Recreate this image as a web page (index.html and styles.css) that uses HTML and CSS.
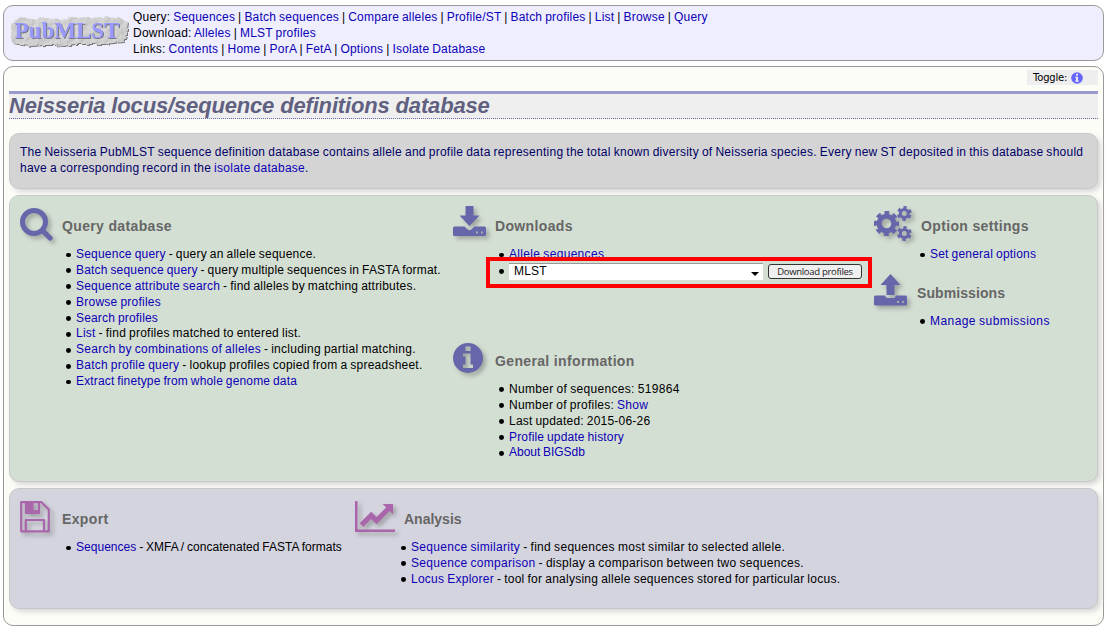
FILE: index.html
```html
<!DOCTYPE html>
<html lang="en">
<head>
<meta charset="utf-8">
<title>Neisseria locus/sequence definitions database</title>
<link rel="stylesheet" href="styles.css">
</head>
<body>
<header class="top">
  <svg class="logo" width="121" height="36" viewBox="0 0 121 36">
    <defs>
      <filter id="stone" x="-5%" y="-10%" width="110%" height="120%">
        <feTurbulence type="fractalNoise" baseFrequency="0.16" numOctaves="3" seed="4" result="n"/>
        <feDisplacementMap in="SourceGraphic" in2="n" scale="5" result="d"/>
        <feDiffuseLighting in="n" surfaceScale="1" lighting-color="#dadada" result="l"><feDistantLight azimuth="225" elevation="64"/></feDiffuseLighting>
        <feComposite in="l" in2="d" operator="in" result="s"/>
        <feDropShadow in="s" dx="1" dy="1" stdDeviation=".6" flood-color="#666" flood-opacity=".9"/>
      </filter>
    </defs>
    <path filter="url(#stone)" fill="#c4c4c4" d="M6 5 L14 3 L24 4 L36 2 L50 4 L62 2 L82 3 L95 2 L111 3 L119 7 L117 20 L114 27 L94 29 L80 29 L65 29 L54 31 L45 30 L34 30 L22 31 L12 30 L4 28 L2 20 L2 9Z"/>
    <text class="logo-text" x="5.500" y="23" textLength="105" lengthAdjust="spacingAndGlyphs">PubMLST</text>
  </svg>
  <div class="nav">
    <div class="n1">Query: <a>Sequences</a> | <a>Batch sequences</a> | <a>Compare alleles</a> | <a>Profile/ST</a> | <a>Batch profiles</a> | <a>List</a> | <a>Browse</a> | <a>Query</a></div>
    <div class="n2">Download: <a>Alleles</a> | <a>MLST profiles</a></div>
    <div class="n3">Links: <a>Contents</a> | <a>Home</a> | <a>PorA</a> | <a>FetA</a> | <a>Options</a> | <a>Isolate Database</a></div>
  </div>
</header>
<main class="page">
  <div class="toggle"><span>Toggle:</span>
    <svg width="12" height="12" viewBox="0 0 12 12"><circle cx="6" cy="6" r="5.800" fill="#66f"/><path fill="#eee" d="M5 1.800h2v1.700H5zM4.200 4.700H7v3.800h.8v1.200H4.200V8.500H5V5.800h-.8z"/></svg>
  </div>
  <h1><span>Neisseria locus/sequence definitions database</span></h1>
  <section class="box intro"><div class="i1">The Neisseria PubMLST sequence definition database contains allele and profile data representing the total known diversity of Neisseria species. Every new ST deposited in this database should</div><div class="i2">have a corresponding record in the <a>isolate database</a>.</div></section>

  <section class="box index">
    <div class="col query">
      <div class="group">
        <svg class="icon" width="42" height="42" viewBox="0 0 42 42"><g class="cast"><circle cx="14" cy="14" r="11.500" fill="none" stroke="#66a" stroke-width="5"/><path d="M22.500 22.500l7.500 7.500" fill="none" stroke="#66a" stroke-width="5.200" stroke-linecap="round"/></g></svg>
        <h2>Query database</h2>
      </div>
      <ul>
        <li><a>Sequence query</a> - query an allele sequence.</li>
        <li><a>Batch sequence query</a> - query multiple sequences in FASTA format.</li>
        <li><a>Sequence attribute search</a> - find alleles by matching attributes.</li>
        <li><a>Browse profiles</a></li>
        <li><a>Search profiles</a></li>
        <li><a>List</a> - find profiles matched to entered list.</li>
        <li><a>Search by combinations of alleles</a> - including partial matching.</li>
        <li><a>Batch profile query</a> - lookup profiles copied from a spreadsheet.</li>
        <li><a>Extract finetype from whole genome data</a></li>
      </ul>
    </div>
    <div class="col downloads">
      <div class="group">
        <svg class="icon" width="42" height="42" viewBox="0 0 42 42"><g class="cast" fill="#66a"><path d="M12.500 -2h8v9.500H26.500L16.500 18 6.500 7.500h6z"/><path fill-rule="evenodd" d="M1.500 18.500h10l3.200 3q1.800 1.500 3.600 0l3.200-3h10q1.500 0 1.500 1.500v6.500q0 1.500-1.500 1.500H1.500Q0 28 0 26.500V20q0-1.500 1.500-1.500zM23 23.500v1.900h1.900v-1.900zM28 23.500v1.900h1.900v-1.900z"/></g></svg>
        <h2>Downloads</h2>
      </div>
      <ul class="files">
        <li><a>Allele sequences</a></li>
        <li class="form"><div class="select">MLST<i></i></div><button>Download profiles</button></li>
      </ul>
      <div class="frame"></div>
      <div class="group info">
        <svg class="icon" width="42" height="42" viewBox="0 0 42 42"><g class="cast"><path fill="#66a" fill-rule="evenodd" d="M15 0a15 15 0 1 1 0 30a15 15 0 0 1 0-30zM12.500 3.500v4.500h5V3.500zM10 10.500v3h2.500v8H10v3.500h10v-3.500h-2.500V10.500z"/></g></svg>
        <h2>General information</h2>
      </div>
      <ul class="facts">
        <li>Number of sequences: 519864</li>
        <li>Number of profiles: <a>Show</a></li>
        <li>Last updated: 2015-06-26</li>
        <li><a>Profile update history</a></li>
        <li><a>About BIGSdb</a></li>
      </ul>
    </div>
    <div class="col options">
      <div class="group">
        <svg class="icon" width="42" height="42" viewBox="0 0 42 42"><g class="cast" fill="none" stroke="#66a"><circle cx="12.500" cy="15.500" r="7.300" stroke-width="5"/><circle cx="12.500" cy="15.500" r="10.800" stroke-width="3.500" stroke-dasharray="4.800 3.682" stroke-dashoffset="2.400"/><circle cx="30.300" cy="5.500" r="4" stroke-width="3"/><circle cx="30.300" cy="5.500" r="6.100" stroke-width="2.600" stroke-dasharray="3.200 3.188" stroke-dashoffset="-1.600"/><circle cx="30.300" cy="25.500" r="4" stroke-width="3"/><circle cx="30.300" cy="25.500" r="6.100" stroke-width="2.600" stroke-dasharray="3.200 3.188" stroke-dashoffset="-1.600"/></g></svg>
        <h2>Option settings</h2>
      </div>
      <ul class="set"><li><a>Set general options</a></li></ul>
      <div class="group sub">
        <svg class="icon" width="42" height="42" viewBox="0 0 42 42"><g class="cast" fill="#66a"><path d="M16.500 -1L26.500 10H20.500v10h-8V10h-6z"/><path fill-rule="evenodd" d="M1.500 20.500h9.500q.8 2.500 2.500 2.500h6q1.700 0 2.500-2.500h9.500q1.500 0 1.500 1.500v7q0 1.500-1.500 1.500H1.500Q0 30.500 0 29v-7q0-1.500 1.500-1.500zM23 26v1.900h1.900v-1.900zM28 26v1.900h1.900v-1.900z"/></g></svg>
        <h2>Submissions</h2>
      </div>
      <ul class="manage"><li><a>Manage submissions</a></li></ul>
    </div>
  </section>

  <section class="box tools">
    <div class="col export">
      <div class="group">
        <svg class="icon" width="42" height="42" viewBox="0 0 42 42"><g class="cast"><path fill="none" stroke="#a6a" stroke-width="2.200" stroke-linejoin="round" d="M1.200 1.200H21.500L28.800 8.500V30.300H1.200zM5.800 30V19H24v11M6 1.200V12H19V1.200"/><path fill="#a6a" d="M6 1h7.500v10H6zM13.500 9h6v3h-6z"/></g></svg>
        <h2>Export</h2>
      </div>
      <ul><li><a>Sequences</a> - XMFA / concatenated FASTA formats</li></ul>
    </div>
    <div class="col analysis">
      <div class="group">
        <svg class="icon" width="50" height="42" viewBox="0 0 50 42"><g class="cast"><path fill="#a6a" d="M0 0h2.500v28.500H40V31H0z"/><path fill="#a6a" d="M4.700 22.200L16.200 10.700 21.500 16 31.200 6.500 27.700 3H38v10.300L34.700 10 21.500 23.200 16.200 18 8.200 26z"/></g></svg>
        <h2>Analysis</h2>
      </div>
      <ul>
        <li><a>Sequence similarity</a> - find sequences most similar to selected allele.</li>
        <li><a>Sequence comparison</a> - display a comparison between two sequences.</li>
        <li><a>Locus Explorer</a> - tool for analysing allele sequences stored for particular locus.</li>
      </ul>
    </div>
  </section>
</main>
</body>
</html>
```
FILE: styles.css
```css
* { box-sizing: border-box; }
body { margin: 0; padding: 5px 3px 0; width: 1107px; height: 632px; overflow: hidden; background: #fff; color: #000; font: 12px/16px "Liberation Sans", Arial, sans-serif; letter-spacing: .21px; word-spacing: -.6px; }
a { color: #0d00b5; }
.top { display: flex; width: 1101px; height: 56px; background: #eef; border: 1px solid #999; border-radius: 10px; }
.logo { margin: 9px 0 0 5px; }
.logo-text { font: bold 23px "Liberation Serif", serif; fill: #99f; letter-spacing: 0; filter: drop-shadow(1px 1px .3px #778); }
.nav { margin: 3px 0 0 3px; white-space: nowrap; }
.page { width: 1101px; height: 560px; margin-top: 5px; padding: 3px 5px 0; background: #fdfdf8; border: 1px solid #999; border-radius: 10px; }
.toggle { display: flex; align-items: center; width: 71px; height: 15px; margin-left: auto; padding-left: 6px; gap: 4px; background: #eee; font: 10px/15px "DejaVu Sans", sans-serif; letter-spacing: -.2px; }
h1 { height: 28px; margin: 6px 0 0; border-top: 3px solid #99c; border-bottom: 1px dotted #66a; background: #efefef; color: #606080; font: italic bold 22px/23px "Liberation Sans", Arial, sans-serif; white-space: nowrap; letter-spacing: -.16px; word-spacing: 0; }
.box { border: 1px solid #c8c8c8; border-radius: 10px; box-shadow: 3px 3px 5px #d8d8d8; }
.intro { height: 56px; margin-top: 14px; padding: 10px; background: #d4d4d4; color: #006; white-space: nowrap; letter-spacing: .255px; }
.index { position: relative; display: flex; height: 287px; margin-top: 6px; padding-left: 10px; background: #d4dfd4; }
.tools { display: flex; height: 121px; margin-top: 6px; padding-left: 10px; background: #d4d4df; }
.query { width: 433px; }
.downloads { width: 421px; }
.export { width: 335px; }
.col { padding-top: 12px; white-space: nowrap; }
.group { display: flex; height: 39px; }
.icon { flex: none; overflow: visible; }
.cast { filter: drop-shadow(3px 3px 2px rgba(80,80,80,.4)); }
h2 { margin: 9px 0 0; color: #666; font: bold 14px/18px "Liberation Sans", Arial, sans-serif; letter-spacing: .35px; word-spacing: 0; }
ul { margin: 0; padding: 0 0 0 56px; list-style: none; line-height: 15.87px; }
li { position: relative; }
li::before { content: ""; position: absolute; left: -10.3px; top: 5.6px; width: 4.8px; height: 4.8px; border-radius: 50%; background: #000; }
.form { display: flex; align-items: center; gap: 5px; height: 18px; }
.form::before { top: 6.3px; }
.select { position: relative; width: 254px; height: 18px; padding-left: 5px; background: #fff; border-top: 1px solid #999; border-bottom: 1px solid #ddd; line-height: 15px; letter-spacing: .2px; }
.select i { position: absolute; right: 4px; top: 8px; border: 4px solid transparent; border-top-color: #000; border-bottom: 0; }
button { width: 94px; height: 15px; padding: 0; border: 1px solid #333; border-radius: 3px; background: #efefef; color: #222; font: 9.5px/12px "Open Sans", sans-serif; letter-spacing: -.3px; word-spacing: 0; }
.frame { position: absolute; left: 476px; top: 61px; width: 386px; height: 31px; border: 4px solid #f00; }
.info { margin-top: 62px; }
.options h2 { margin-left: 5px; }
.sub { margin-top: 12px; }
.options .sub h2 { margin-left: 1px; letter-spacing: .08px; }
.analysis h2 { margin-left: -1px; letter-spacing: 0; }

/* Line tracking */
.query li:nth-child(2), .query li:nth-child(5) { letter-spacing: .17px; }
.query li:nth-child(4), .query li:nth-child(6), .query li:nth-child(8) { letter-spacing: .235px; }
.query li:nth-child(7) { letter-spacing: .26px; }
.query li:nth-child(9) { letter-spacing: .15px; }
.facts li:nth-child(1) { letter-spacing: .31px; }
.facts li:nth-child(2) { letter-spacing: .26px; }
.facts li:nth-child(4) { letter-spacing: .155px; }
.facts li:nth-child(5) { letter-spacing: -.02px; }
.files { letter-spacing: .32px; }
.manage { letter-spacing: .43px; }
.export ul { letter-spacing: .035px; }
.analysis ul { letter-spacing: .3px; }
.analysis li:nth-child(3) { letter-spacing: .25px; }
```
